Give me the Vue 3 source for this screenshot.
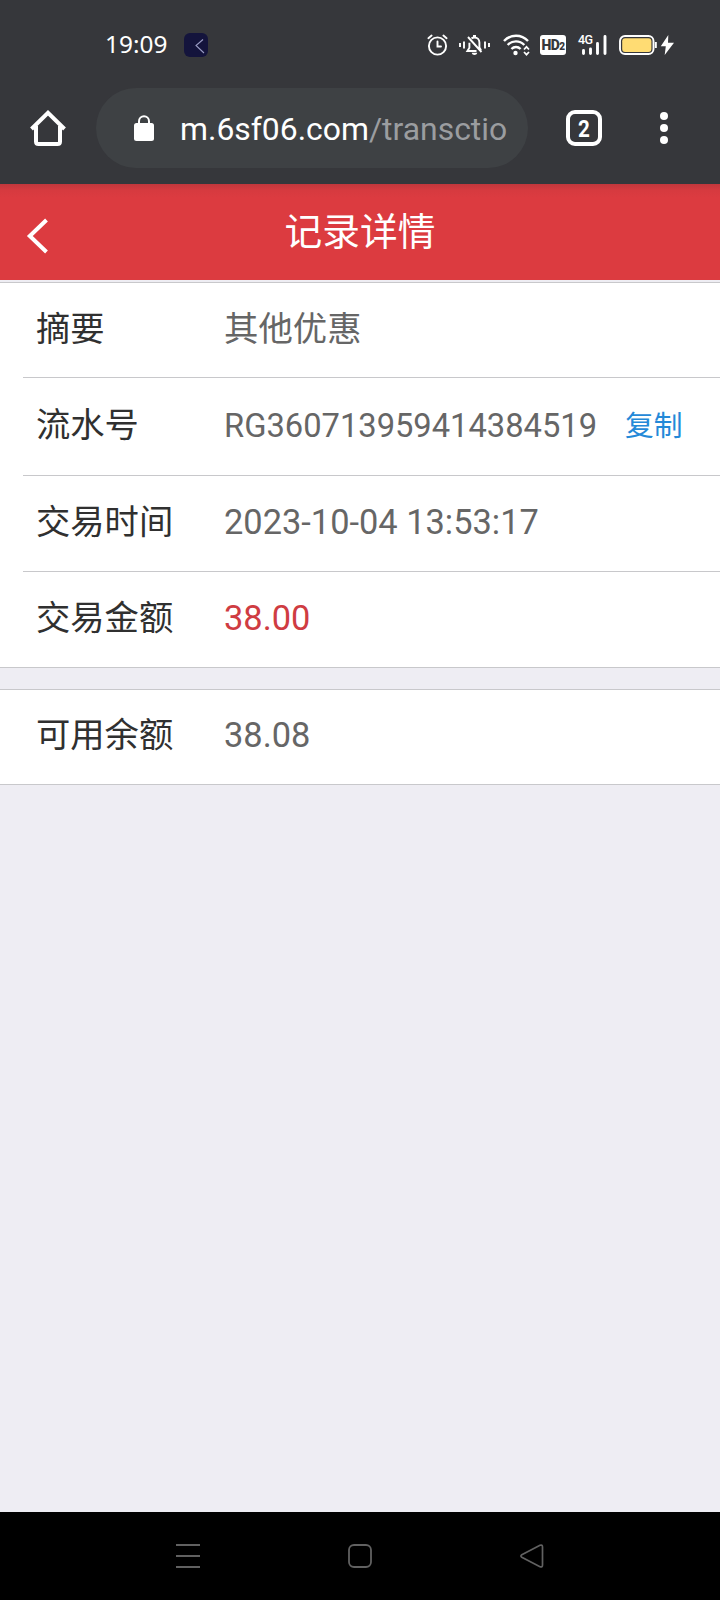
<template>
  <div class="screen">
    <div class="status-bar">
      <span class="clock">19:09</span>
      <span class="app-badge">
        <svg width="24" height="24" viewBox="0 0 24 24">
          <path d="M19 6.5L12 12.5l8 7.5" fill="none" stroke="#9a9cc4" stroke-width="1.1" />
        </svg>
      </span>
      <div class="status-icons">
        <svg class="alarm" width="22" height="24" viewBox="0 0 22 24">
          <g fill="none" stroke="#fff" stroke-width="1.9" stroke-linecap="round">
            <circle cx="10.5" cy="13" r="8.6" />
            <path d="M10.5 8.5v5h3.5M1.4 5.2l3.2-2.7M19.6 5.2l-3.2-2.7" />
          </g>
        </svg>
        <svg class="bell" width="31" height="24" viewBox="0 0 31 24">
          <g fill="none" stroke="#fff" stroke-width="1.9">
            <path d="M1 10v4M5 8.500v7M26 8.500v7M30 10v4" />
            <path d="M12.500 5.400c.9-.6 1.900-.9 3-.9 3 0 4.900 2.200 4.900 5v5l1.600 2.800M17.500 18H8.400l2-3.200V9.800M9 4l13.500 15" />
          </g>
          <path d="M14 2h3v3h-3zM12.700 19.800h5.600c-.4 1.500-1.400 2.200-2.800 2.200s-2.400-.7-2.800-2.200z" fill="#fff" />
        </svg>
        <svg class="wifi" width="28" height="24" viewBox="0 0 28 24">
          <g fill="none" stroke="#fff" stroke-width="2.400">
            <path d="M1 8C7.500 1 18.500 1 25 8" />
            <path d="M4.700 12c4.700-4.800 11.900-4.800 16.600 0" />
            <path d="M8.400 16c2.700-2.700 6.500-2.700 9.200 0" />
          </g>
          <circle cx="12.500" cy="20" r="2.200" fill="#fff" />
          <path d="M21 16.500l2.500-2.700 2.500 2.700M21 19l2.500 2.700L26 19" fill="none" stroke="#fff" stroke-width="1.700" />
        </svg>
        <span class="hd">HD<small>2</small></span>
        <div class="signal">
          <span class="network">4G</span>
          <svg width="29" height="24" viewBox="0 0 29 24">
            <path d="M5.500 17.500v3M12.500 16v4.500M19.500 10.500v10M27 3.500v17" stroke="#fff" stroke-width="2.900" stroke-linecap="round" />
          </svg>
        </div>
        <svg class="battery" width="38" height="24" viewBox="0 0 38 24">
          <rect x="1" y="3" width="33.500" height="18" rx="5" fill="none" stroke="#fff" stroke-width="1.900" />
          <rect x="3.200" y="5.200" width="29.200" height="13.700" rx="3" fill="#ffdc73" />
          <path d="M36.800 9v6" stroke="#fff" stroke-width="2" />
        </svg>
        <svg class="bolt" width="15" height="24" viewBox="0 0 15 24">
          <path d="M8.300 2L.8 13.300h5L4.700 22 14 9.800H8z" fill="#fff" />
        </svg>
      </div>
    </div>

    <div class="browser-bar">
      <svg class="home" width="36" height="36" viewBox="0 0 36 36">
        <path d="M1.500 19L18 2.800 34.500 19M6 16v15.500Q6 34 8.500 34h19q2.500 0 2.500-2.500V16" fill="none" stroke="#fff" stroke-width="4" />
      </svg>
      <div class="address">
        <svg class="lock" width="20" height="26" viewBox="0 0 20 26">
          <path d="M5 9V6.200a5 5 0 0 1 10 0V9" fill="none" stroke="#fff" stroke-width="2" />
          <rect y="8" width="20" height="18" rx="2.500" fill="#fff" />
        </svg>
        <span class="url">m.6sf06.com<span class="path">/transctio</span></span>
      </div>
      <span class="tabs"><span class="count">2</span></span>
      <svg class="more" width="8" height="32" viewBox="0 0 8 32">
        <g fill="#fff">
          <circle cx="4" cy="4" r="4" />
          <circle cx="4" cy="16" r="4" />
          <circle cx="4" cy="28" r="4" />
        </g>
      </svg>
    </div>

    <header class="page-header">
      <svg class="back" width="22" height="36" viewBox="0 0 22 36">
        <path d="M20.500 2L3.800 18l16.700 16" fill="none" stroke="#fff" stroke-width="4" />
      </svg>
      <h1>记录详情</h1>
    </header>

    <main class="content">
      <section class="group">
        <div v-for="item in details" :key="item.label" class="row" :class="item.type">
          <span class="label">{{ item.label }}</span>
          <span class="value">{{ item.value }}</span>
          <span v-if="item.type === 'serial'" class="copy" @click="copy(item.value)">复制</span>
        </div>
      </section>
      <section class="group balance">
        <div class="row">
          <span class="label">可用余额</span>
          <span class="value">{{ balance }}</span>
        </div>
      </section>
    </main>

    <nav class="nav-bar">
      <svg width="24" height="24" viewBox="0 0 24 24">
        <path d="M0 1h24M0 12h24M0 23h24" stroke="#616161" stroke-width="2" />
      </svg>
      <svg width="24" height="24" viewBox="0 0 24 24">
        <rect x="1" y="1" width="22" height="22" rx="5" fill="none" stroke="#616161" stroke-width="1.800" />
      </svg>
      <svg width="24" height="24" viewBox="0 0 24 24">
        <path d="M1.800 10.800L20 1.300q2.500-.8 2.500 1.700v18q0 2.500-2.500 1.700L1.800 13.200q-1.800-1.200 0-2.400z" fill="none" stroke="#616161" stroke-width="1.700" />
      </svg>
    </nav>
  </div>
</template>

<script setup>
import { ref } from 'vue';

const details = ref([
  { label: '摘要', value: '其他优惠', type: 'summary' },
  { label: '流水号', value: 'RG360713959414384519', type: 'serial' },
  { label: '交易时间', value: '2023-10-04 13:53:17', type: 'time' },
  { label: '交易金额', value: '38.00', type: 'amount' },
]);
const balance = ref('38.08');

function copy(text) {
  navigator.clipboard?.writeText(text);
}
</script>

<style>
body {
  margin: 0;
}
</style>

<style scoped>
.screen {
  display: flex;
  flex-direction: column;
  width: 720px;
  height: 1600px;
  overflow: hidden;
  background: #eeedf3;
  font-family: Roboto, "Noto Sans CJK SC", sans-serif;
}

svg {
  display: block;
  flex: none;
}

.status-bar {
  display: flex;
  align-items: center;
  box-sizing: border-box;
  height: 88px;
  padding: 2px 45px 0 105px;
  background: #36373b;
  color: #fff;
}

.clock {
  width: 79px;
  margin-bottom: 2px;
  font-family: "Noto Sans", sans-serif;
  font-size: 24.400px;
  line-height: 30px;
}

.app-badge {
  border-radius: 6px;
  background: #14143c;
}

.status-icons {
  display: flex;
  align-items: center;
  margin-left: auto;
}

.bell {
  margin-left: 10px;
}

.wifi {
  margin-left: 13px;
}

.hd {
  display: flex;
  align-items: baseline;
  justify-content: center;
  width: 26px;
  height: 20px;
  margin-left: 9px;
  border-radius: 3px;
  background: #fff;
  color: #36373b;
  font-size: 14px;
  font-weight: 900;
  letter-spacing: -0.5px;
  line-height: 21px;
}

.hd small {
  font-size: 10px;
}

.signal {
  position: relative;
  margin-left: 12px;
}

.network {
  position: absolute;
  top: 1px;
  left: 0;
  font-size: 12.500px;
  font-weight: 500;
  letter-spacing: -0.5px;
  line-height: 12px;
}

.battery {
  margin-left: 12px;
}

.bolt {
  margin-left: 3px;
}

.browser-bar {
  display: flex;
  align-items: center;
  height: 80px;
  padding: 0 52px 16px 30px;
  background: #36373b;
}

.address {
  display: flex;
  align-items: center;
  box-sizing: border-box;
  width: 432px;
  height: 80px;
  margin-left: 30px;
  padding-left: 38px;
  border-radius: 40px;
  background: #3e4144;
}

.url {
  margin: 2px 0 0 26px;
  color: #fff;
  font-size: 31.900px;
  line-height: 40px;
  white-space: nowrap;
}

.path {
  color: #9b9da0;
}

.tabs {
  box-sizing: border-box;
  width: 36px;
  height: 36px;
  margin-left: 38px;
  border: 4px solid #fff;
  border-radius: 9px;
  color: #fff;
  font-size: 24px;
  font-weight: 700;
  line-height: 30px;
  text-align: center;
}

.count {
  display: block;
  transform: scaleX(0.86);
}

.more {
  margin-left: auto;
}

.page-header {
  display: flex;
  align-items: center;
  box-sizing: border-box;
  height: 96px;
  padding: 0 26px;
  background: linear-gradient(#c1373c, #d63a3f 6px, #dc3b40 14px);
}

.back {
  margin-top: 7px;
}

.page-header h1 {
  flex: 1;
  margin: 0 22px 1px 0;
  color: #fff;
  font-size: 37.700px;
  font-weight: 400;
  line-height: 56px;
  text-align: center;
}

.content {
  flex: 1;
  padding-top: 2px;
}

.group {
  border-top: 1px solid #c8c8cb;
  border-bottom: 1px solid #c8c8cb;
  background: #fff;
}

.balance {
  margin-top: 21px;
}

.row {
  display: flex;
  align-items: center;
  box-sizing: border-box;
  height: 94px;
  margin-left: 23px;
  padding: 0 0 4px 13px;
  color: #666;
  font-size: 34.400px;
  line-height: 50px;
}

.summary {
  height: 95px;
  padding-bottom: 3px;
  border-bottom: 1px solid #c8c8cb;
}

.serial {
  height: 98px;
  border-bottom: 1px solid #c8c8cb;
}

.time {
  height: 96px;
  border-bottom: 1px solid #c8c8cb;
}

.amount {
  height: 95px;
}

.label {
  width: 188px;
  color: #303030;
  font-size: 34.300px;
}

.serial .value {
  width: 401px;
  padding-top: 2px;
  font-size: 32.700px;
}

.amount .value {
  color: #cf3c42;
}

.copy {
  padding-top: 3px;
  color: #2489d8;
  font-size: 28.800px;
}

.nav-bar {
  display: flex;
  justify-content: space-between;
  height: 56px;
  padding: 32px 176px 0;
  background: #000;
}
</style>
